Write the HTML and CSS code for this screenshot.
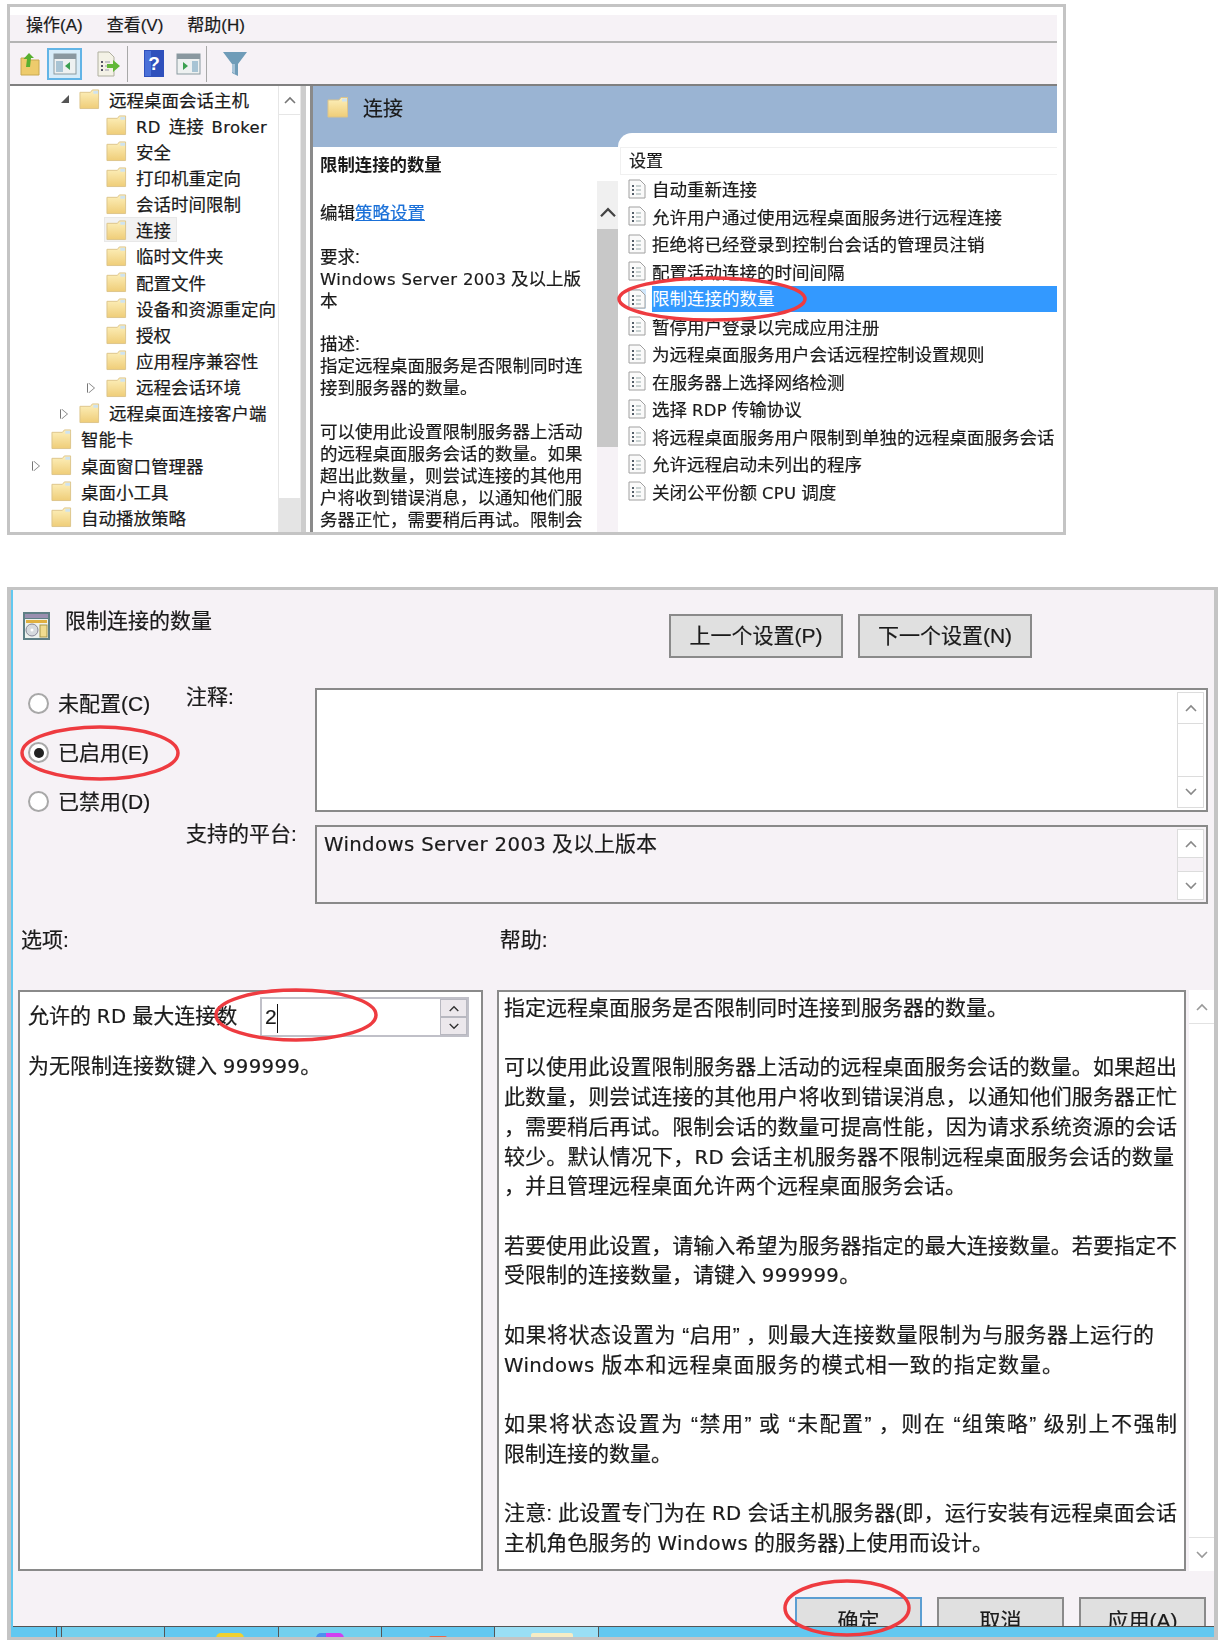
FILE: index.html
```html
<!DOCTYPE html>
<html lang="zh-CN">
<head>
<meta charset="utf-8">
<title>限制连接的数量</title>
<link rel="stylesheet" href="styles.css">
</head>
<body>
<svg class="defs" width="0" height="0" aria-hidden="true">
  <defs>
    <linearGradient id="fg" x1="0" y1="0" x2="0" y2="1"><stop offset="0" stop-color="#fdf0bc"/><stop offset="1" stop-color="#efcd78"/></linearGradient>
    <symbol id="folder" viewBox="0 0 22 22">
      <path d="M1 4h11l2-2.500h6.500V21H1z" fill="url(#fg)" stroke="#dcc48a" stroke-width="1"/>
      <path d="M15 2.500h5v3h-5z" fill="#cfe3ef"/>
    </symbol>
    <symbol id="doc" viewBox="0 0 18 20">
      <path d="M1 1h11l5 5v13H1z" fill="#fafafa" stroke="#a0a0a0"/>
      <path d="M4 6h2v2H4zM4 10h2v2H4zM4 14h2v2H4z" fill="#55606a"/>
      <path d="M8 7h5M8 11h5M8 15h5" stroke="#9aa" fill="none"/>
    </symbol>
    <symbol id="up" viewBox="0 0 14 10"><path d="M2 8l5-5 5 5" fill="none" stroke="currentColor" stroke-width="1.6"/></symbol>
    <symbol id="down" viewBox="0 0 14 10"><path d="M2 2l5 5 5-5" fill="none" stroke="currentColor" stroke-width="1.6"/></symbol>
  </defs>
</svg>

<section class="mmc">
  <div class="menubar"><span>操作(A)</span><span>查看(V)</span><span>帮助(H)</span></div>
  <div class="toolbar">
    <svg class="tb tb-up" width="20" height="24" viewBox="0 0 20 24"><path d="M1 6h6l2 2h10v15H1z" fill="#eecb6c" stroke="#c9a850"/><path d="M6 15l1-8H3.500L9 1l5 5h-3l-1 9z" fill="#58b030"/></svg>
    <span class="tb-active"><svg width="24" height="24" viewBox="0 0 24 24"><rect x="1" y="2" width="22" height="20" fill="#eef1f1" stroke="#8a9aa0"/><rect x="1" y="2" width="22" height="5" fill="#8a98a0"/><rect x="3" y="9" width="7" height="11" fill="#a8c4d4"/><path d="M17 10v8l-5-4z" fill="#3aa050"/></svg></span>
    <svg class="tb tb-ex" width="24" height="26" viewBox="0 0 24 26"><path d="M1 1h11l5 5v19H1z" fill="#f4f2e6" stroke="#b0b0a0"/><path d="M4 10h2v2H4zM4 14h2v2H4zM4 18h2v2H4z" fill="#556"/><path d="M8 11h5M8 15h4M8 19h4" stroke="#99a"/><path d="M10 13h6V9l7 6-7 6v-4h-6z" fill="#62b838"/></svg>
    <i class="tb-sep"></i>
    <svg class="tb tb-help" width="20" height="27" viewBox="0 0 20 27"><rect width="20" height="27" fill="#2f50bc"/><rect x="1" y="1" width="6" height="25" fill="#4a70d8"/><text x="10" y="20" class="tb-q">?</text></svg>
    <svg class="tb tb-pane" width="25" height="24" viewBox="0 0 25 24"><rect x="1" y="2" width="23" height="20" fill="#eef1f1" stroke="#8a9aa0"/><rect x="1" y="2" width="23" height="5" fill="#8a98a0"/><rect x="16" y="9" width="6" height="11" fill="#a8c4d4"/><path d="M7 10v8l5-4z" fill="#3aa050"/></svg>
    <i class="tb-sep tb-sep2"></i>
    <svg class="tb tb-filter" width="24" height="26" viewBox="0 0 24 26"><path d="M0 1h24l-9 12v12l-6-3v-9z" fill="#6f9cb8"/><path d="M9 13h3v10l-3-2z" fill="#a8c4d8"/></svg>
  </div>
  <div class="mmc-body">
    <div class="tree">
      <div class="tree-rows">
        <div class="row l1"><i class="tri open"></i><svg class="fld"><use href="#folder"/></svg><span>远程桌面会话主机</span></div>
        <div class="row l2"><svg class="fld"><use href="#folder"/></svg><span class="wide"><span class="la">RD</span> 连接 <span class="la">Broker</span></span></div>
        <div class="row l2"><svg class="fld"><use href="#folder"/></svg><span>安全</span></div>
        <div class="row l2"><svg class="fld"><use href="#folder"/></svg><span>打印机重定向</span></div>
        <div class="row l2"><svg class="fld"><use href="#folder"/></svg><span>会话时间限制</span></div>
        <div class="row l2 current"><div class="cur"><svg class="fld"><use href="#folder"/></svg><span>连接</span></div></div>
        <div class="row l2"><svg class="fld"><use href="#folder"/></svg><span>临时文件夹</span></div>
        <div class="row l2"><svg class="fld"><use href="#folder"/></svg><span>配置文件</span></div>
        <div class="row l2"><svg class="fld"><use href="#folder"/></svg><span>设备和资源重定向</span></div>
        <div class="row l2"><svg class="fld"><use href="#folder"/></svg><span>授权</span></div>
        <div class="row l2"><svg class="fld"><use href="#folder"/></svg><span>应用程序兼容性</span></div>
        <div class="row l2"><i class="tri"></i><svg class="fld"><use href="#folder"/></svg><span>远程会话环境</span></div>
        <div class="row l1"><i class="tri"></i><svg class="fld"><use href="#folder"/></svg><span>远程桌面连接客户端</span></div>
        <div class="row l0"><svg class="fld"><use href="#folder"/></svg><span>智能卡</span></div>
        <div class="row l0"><i class="tri"></i><svg class="fld"><use href="#folder"/></svg><span>桌面窗口管理器</span></div>
        <div class="row l0"><svg class="fld"><use href="#folder"/></svg><span>桌面小工具</span></div>
        <div class="row l0"><svg class="fld"><use href="#folder"/></svg><span>自动播放策略</span></div>
      </div>
      <div class="tree-scroll">
        <div class="ts-up"><svg width="14" height="10"><use href="#up"/></svg></div>
        <div class="ts-thumb"></div>
      </div>
    </div>
    <div class="pane">
      <div class="pane-head"><svg class="fld-h"><use href="#folder"/></svg><span>连接</span></div>
      <div class="pane-body">
        <div class="desc">
          <p class="desc-title">限制连接的数量</p>
          <p>编辑<a class="link">策略设置</a></p>
          <p>要求:<br><span class="la">Windows Server 2003</span> 及以上版<br>本</p>
          <p>描述:<br>指定远程桌面服务是否限制同时连<br>接到服务器的数量。</p>
          <p>可以使用此设置限制服务器上活动<br>的远程桌面服务会话的数量。如果<br>超出此数量，则尝试连接的其他用<br>户将收到错误消息，以通知他们服<br>务器正忙，需要稍后再试。限制会</p>
        </div>
        <div class="desc-scroll">
          <div class="ds-up"><svg width="20" height="14" viewBox="0 0 14 10"><use href="#up"/></svg></div>
          <div class="ds-thumb"></div>
        </div>
        <div class="list">
          <div class="list-head">设置</div>
          <div class="item"><svg class="dc"><use href="#doc"/></svg><span>自动重新连接</span></div>
          <div class="item"><svg class="dc"><use href="#doc"/></svg><span>允许用户通过使用远程桌面服务进行远程连接</span></div>
          <div class="item"><svg class="dc"><use href="#doc"/></svg><span>拒绝将已经登录到控制台会话的管理员注销</span></div>
          <div class="item"><svg class="dc"><use href="#doc"/></svg><span>配置活动连接的时间间隔</span></div>
          <div class="item selected"><svg class="dc"><use href="#doc"/></svg><span>限制连接的数量</span></div>
          <div class="item"><svg class="dc"><use href="#doc"/></svg><span>暂停用户登录以完成应用注册</span></div>
          <div class="item"><svg class="dc"><use href="#doc"/></svg><span>为远程桌面服务用户会话远程控制设置规则</span></div>
          <div class="item"><svg class="dc"><use href="#doc"/></svg><span>在服务器上选择网络检测</span></div>
          <div class="item"><svg class="dc"><use href="#doc"/></svg><span>选择 <span class="la">RDP</span> 传输协议</span></div>
          <div class="item"><svg class="dc"><use href="#doc"/></svg><span>将远程桌面服务用户限制到单独的远程桌面服务会话</span></div>
          <div class="item"><svg class="dc"><use href="#doc"/></svg><span>允许远程启动未列出的程序</span></div>
          <div class="item"><svg class="dc"><use href="#doc"/></svg><span>关闭公平份额 <span class="la">CPU</span> 调度</span></div>
        </div>
      </div>
    </div>
  </div>
</section>

<section class="dialog">
  <div class="dlg-inner">
    <header class="dlg-head">
      <svg class="dlg-icon" width="27" height="28" viewBox="0 0 27 28"><rect width="27" height="28" fill="#5f7f86"/><rect x="2" y="2" width="23" height="4" fill="#9a8fb0"/><rect x="2" y="7" width="23" height="19" fill="#eef2ee"/><rect x="3" y="8" width="21" height="3" fill="#e0b040"/><circle cx="9" cy="18" r="6" fill="#d6dade" stroke="#889"/><circle cx="9" cy="18" r="1.500" fill="#fff"/><rect x="17" y="13" width="7" height="12" fill="#f0dc90" stroke="#a89848"/></svg>
      <div class="dlg-title">限制连接的数量</div>
      <div class="nav-btns"><button class="btn nav">上一个设置(P)</button><button class="btn nav">下一个设置(N)</button></div>
    </header>
    <div class="config">
      <div class="radios">
        <label class="radio"><i class="dot"></i>未配置(C)</label>
        <label class="radio"><i class="dot on"></i>已启用(E)</label>
        <label class="radio"><i class="dot"></i>已禁用(D)</label>
      </div>
      <div class="lbl lbl-note">注释:</div>
      <div class="box box-note">
        <div class="sb">
          <div class="sb-btn"><svg width="14" height="10"><use href="#up"/></svg></div>
          <div class="sb-track"></div>
          <div class="sb-btn"><svg width="14" height="10"><use href="#down"/></svg></div>
        </div>
      </div>
      <div class="lbl lbl-plat">支持的平台:</div>
      <div class="box box-plat">
        <div class="plat-text"><span class="la">Windows Server 2003</span> 及以上版本</div>
        <div class="sb">
          <div class="sb-btn"><svg width="14" height="10"><use href="#up"/></svg></div>
          <div class="sb-track"></div>
          <div class="sb-btn"><svg width="14" height="10"><use href="#down"/></svg></div>
        </div>
      </div>
    </div>
    <div class="sect-labels"><span class="sl-opt">选项:</span><span class="sl-help">帮助:</span></div>
    <div class="panels">
      <div class="opts">
        <div class="opt-row"><span class="opt-label">允许的 <span class="la">RD</span> 最大连接数</span>
          <div class="spin"><div class="spin-val">2<i class="caret"></i></div><div class="spin-btns"><div class="spin-btn"><svg width="12" height="9" viewBox="0 0 14 10"><use href="#up"/></svg></div><div class="spin-btn"><svg width="12" height="9" viewBox="0 0 14 10"><use href="#down"/></svg></div></div></div>
        </div>
        <div class="opt-note">为无限制连接数键入 <span class="la">999999</span>。</div>
      </div>
      <div class="help">
        <div>指定远程桌面服务是否限制同时连接到服务器的数量。</div>
        <div class="gap"></div>
        <div class="j">可以使用此设置限制服务器上活动的远程桌面服务会话的数量。如果超出</div>
        <div class="j">此数量，则尝试连接的其他用户将收到错误消息，以通知他们服务器正忙</div>
        <div class="j">，需要稍后再试。限制会话的数量可提高性能，因为请求系统资源的会话</div>
        <div class="j jd">较少。默认情况下，<span class="la">RD</span> 会话主机服务器不限制远程桌面服务会话的数量</div>
        <div>，并且管理远程桌面允许两个远程桌面服务会话。</div>
        <div class="gap"></div>
        <div class="j">若要使用此设置，请输入希望为服务器指定的最大连接数量。若要指定不</div>
        <div>受限制的连接数量，请键入 <span class="la">999999</span>。</div>
        <div class="gap"></div>
        <div class="j ja">如果将状态设置为 “启用” ，则最大连接数量限制为与服务器上运行的</div>
        <div class="j jb"><span class="la">Windows</span> 版本和远程桌面服务的模式相一致的指定数量。</div>
        <div class="gap"></div>
        <div class="j">如果将状态设置为 “禁用” 或 “未配置” ，则在 “组策略” 级别上不强制</div>
        <div>限制连接的数量。</div>
        <div class="gap"></div>
        <div class="j">注意: 此设置专门为在 <span class="la">RD</span> 会话主机服务器(即，运行安装有远程桌面会话</div>
        <div class="j jc">主机角色服务的 <span class="la">Windows</span> 的服务器)上使用而设计。</div>
      </div>
      <div class="help-sb">
        <div class="hs-btn"><svg width="14" height="10"><use href="#up"/></svg></div>
        <div class="hs-track"></div>
        <div class="hs-btn"><svg width="14" height="10"><use href="#down"/></svg></div>
      </div>
    </div>
    <footer class="dlg-foot">
      <button class="btn act primary">确定</button>
      <button class="btn act">取消</button>
      <button class="btn act">应用(A)</button>
    </footer>
    <div class="taskbar">
      <div class="tk w46"></div>
      <div class="tk w5"></div>
      <div class="tk w103 lt"></div>
      <div class="tk w114"><i class="peek yellow"></i></div>
      <div class="tk w103 lt"><i class="peek purple"></i></div>
      <div class="tk w113"><i class="peek red"></i></div>
      <div class="tk w104 act-tk"><i class="peek cream"></i></div>
    </div>
  </div>
</section>

<svg class="marks" width="1228" height="1648" viewBox="0 0 1228 1648" aria-hidden="true">
  <ellipse cx="712" cy="299" rx="93" ry="21"/>
  <ellipse cx="100" cy="753" rx="78" ry="26"/>
  <ellipse cx="296" cy="1015" rx="80" ry="25"/>
  <ellipse cx="847" cy="1608" rx="62" ry="27"/>
</svg>
</body>
</html>
```
FILE: styles.css
```css
* { box-sizing: border-box; }
html, body { margin: 0; padding: 0; }
body {
  position: relative;
  width: 1228px;
  height: 1648px;
  overflow: hidden;
  background: #fff;
  color: #1a1a1a;
  font-family: "Liberation Sans", "Noto Sans CJK SC", sans-serif;
  -webkit-text-stroke: 0.2px currentColor;
}
.defs { position: absolute; }
.mmc, .dialog { filter: blur(0.45px); }
p { margin: 0; }
.la { font-family: "DejaVu Sans", sans-serif; font-size: 0.94em; letter-spacing: 0.35px; line-height: 1; }
.wide { word-spacing: 3px; }

/* top console window */
.mmc {
  margin: 4px 0 0 7px;
  width: 1059px;
  height: 531px;
  border: 3px solid #c4c4c4;
  padding: 8px 6px 0 0;
  overflow: hidden;
  display: flex;
  flex-direction: column;
  font-size: 17.5px;
}
.menubar {
  height: 28px;
  flex: none;
  background: #f6f2f6;
  border-bottom: 2px solid #b4b4b4;
  display: flex;
  gap: 24px;
  padding-left: 16px;
  font-size: 17px;
  line-height: 22px;
}
.toolbar {
  height: 43px;
  flex: none;
  background: #f6f2f6;
  border-bottom: 2px solid #808080;
  display: flex;
  align-items: center;
  padding-left: 10px;
}
.tb { flex: none; }
.tb-active {
  width: 35px;
  height: 32px;
  margin-left: 7px;
  border: 2px solid #62b4e6;
  background: #d8ecf8;
  display: flex;
  align-items: center;
  justify-content: center;
}
.tb-ex { margin-left: 15px; }
.tb-sep { width: 1px; height: 36px; background: #a8a8a8; margin-left: 6px; }
.tb-help { margin-left: 16px; }
.tb-pane { margin-left: 12px; }
.tb-sep2 { margin-left: 5px; }
.tb-filter { margin-left: 16px; }
.tb-q { fill: #fff; font-size: 19px; font-weight: 700; text-anchor: middle; font-family: "Liberation Sans", sans-serif; }
.mmc-body { flex: 1; display: flex; min-height: 0; }

/* tree */
.tree { width: 296px; margin-right: 4px; flex: none; display: flex; overflow: hidden; border-right: 5px solid #cdcdcd; }
.tree-rows { width: 268px; flex: none; background: #fff; }
.row { height: 26.15px; display: flex; align-items: center; white-space: nowrap; position: relative; }
.row.l0 { padding-left: 41px; }
.row.l1 { padding-left: 69px; }
.row.l2 { padding-left: 96px; }
.fld { width: 21px; height: 22px; flex: none; margin-right: 9px; }
.cur { display: flex; align-items: center; background: #f2f2f2; border: 1px solid #e8e8e8; margin-left: -2px; padding-left: 1px; padding-right: 5px; height: 25px; }
.tri {
  position: absolute;
  width: 0; height: 0;
  border-left: 6px solid #fff;
  border-top: 5px solid transparent;
  border-bottom: 5px solid transparent;
  filter: drop-shadow(1px 0 0 #777) drop-shadow(-1px 0 0 #777);
  top: 9px;
}
.tri.open {
  border: 0;
  border-right: 8px solid #555;
  border-top: 8px solid transparent;
  filter: none;
}
.row.l0 .tri { left: 23px; }
.row.l1 .tri { left: 51px; }
.row.l2 .tri { left: 78px; }
.tree-scroll { width: 23px; flex: none; display: flex; flex-direction: column; background: #fff; border-left: 1px solid #e6e6e6; border-right: 1px solid #e6e6e6; }
.ts-up { height: 29px; color: #777; display: flex; align-items: center; justify-content: center; border-bottom: 1px solid #e6e6e6; }
.ts-thumb { margin-top: auto; height: 34px; background: #e4e4e4; }

/* right pane */
.pane { flex: 1; min-width: 0; border-left: 3px solid #8a8a8a; display: flex; flex-direction: column; overflow: hidden; }
.pane-head {
  height: 61px;
  flex: none;
  background: #9ab4d3;
  display: flex;
  align-items: flex-start;
  padding: 10px 0 0 14px;
  font-size: 20px;
  line-height: 24px;
}
.fld-h { width: 22px; height: 22px; margin-right: 14px; }
.pane-head span { margin-top: 1px; }
.pane-body { flex: 1; display: flex; min-height: 0; background: #fff; }
.desc { width: 284px; flex: none; padding: 8px 0 0 7px; font-size: 17.5px; line-height: 21.9px; white-space: nowrap; overflow: hidden; }
.desc p { margin-bottom: 21.9px; }
.desc .desc-title { margin-bottom: 26px; font-weight: 700; -webkit-text-stroke: 0; font-size: 17.4px; }
.link { color: #1a70d8; text-decoration: underline; }
.desc-scroll { width: 21px; flex: none; margin-top: 34px; background: #f6f2f6; display: flex; flex-direction: column; }
.ds-up { height: 48px; background: #f0f0f0; color: #444; display: flex; align-items: flex-end; justify-content: center; padding-bottom: 10px; }
.ds-thumb { height: 218px; background: #c8c8c8; }
.list { flex: 1; min-width: 0; margin-top: -14px; background: #fff; border-top-left-radius: 14px; padding-top: 14px; position: relative; white-space: nowrap; overflow: hidden; }
.list-head { height: 28px; margin-left: 2px; padding-left: 8px; border: 1px solid #f0f0f0; border-right: 0; line-height: 28px; font-size: 17px; }
.item { height: 27.53px; display: flex; align-items: center; padding-left: 10px; font-size: 17.5px; }
.dc { width: 18px; height: 20px; flex: none; margin-right: 6px; }
.selected span { background: #3399ff; color: #fff; flex: 1; line-height: 26px; -webkit-text-stroke: 0; }
.selected .dc { background: #cfe6fb; }

/* dialog */
.dialog {
  margin: 52px 0 0 7px;
  width: 1211px;
  height: 1053px;
  border: solid #c4c4c4;
  border-width: 3px 4px 3px 4px;
}
.dlg-inner {
  height: 100%;
  background: #f6f2f6;
  border-left: 2px solid #62c8f0;
  display: flex;
  flex-direction: column;
  overflow: hidden;
  font-size: 21px;
}
.dlg-head { height: 98px; flex: none; display: flex; align-items: flex-start; padding-left: 10px; }
.dlg-icon { margin-top: 22px; flex: none; }
.dlg-title { margin: 16px 0 0 15px; line-height: 30px; }
.nav-btns { margin-left: auto; padding: 24px 182px 0 0; display: flex; gap: 15px; }
.btn {
  font: inherit;
  color: #1a1a1a;
  background: #e0e0e0;
  border: 2px solid #8a8a8a;
  padding: 0;
  -webkit-text-stroke: 0.2px currentColor;
}
.btn.nav { width: 174px; height: 44px; padding-bottom: 4px; }
.config {
  flex: none;
  display: grid;
  grid-template-columns: 173px 129px 893px;
  grid-template-rows: 124px 79px;
  row-gap: 13px;
}
.radios { grid-row: 1 / span 2; padding: 5px 0 0 15px; display: flex; flex-direction: column; gap: 28px; }
.radio { display: flex; align-items: center; height: 21px; line-height: 23px; white-space: nowrap; }
.dot { width: 21px; height: 21px; flex: none; border: 2px solid #a8a8a8; border-radius: 50%; background: #fff; margin-right: 9px; display: flex; align-items: center; justify-content: center; }
.dot.on::after { content: ""; width: 10px; height: 10px; border-radius: 50%; background: #222; }
.lbl { white-space: nowrap; line-height: 24px; }
.lbl-note { grid-column: 2; grid-row: 1; margin-top: -3px; }
.lbl-plat { grid-column: 2; grid-row: 2; margin-top: -3px; }
.box { border: 2px solid #8a8a8a; display: flex; justify-content: space-between; }
.box-note { grid-column: 3; grid-row: 1; background: #fff; }
.box-plat { grid-column: 3; grid-row: 2; }
.plat-text { padding: 4px 0 0 7px; line-height: 26px; white-space: nowrap; }
.sb { width: 27px; margin: 2px 2px 2px auto; flex: none; display: flex; flex-direction: column; background: #fff; border: 1px solid #dcdcdc; }
.box-plat .sb { background: #f6f2f6; }
.sb-btn { height: 31px; flex: none; color: #888; background: #fff; display: flex; align-items: center; justify-content: center; }
.sb-btn:first-child { border-bottom: 1px solid #dcdcdc; }
.sb-btn:last-child { border-top: 1px solid #dcdcdc; }
.box-plat .sb-btn { height: 28px; }
.sb-track { flex: 1; }
.sect-labels { flex: none; height: 86px; padding: 24px 0 0 8px; line-height: 24px; display: flex; }
.sl-help { margin-left: 431px; }
.panels { flex: none; height: 581px; display: flex; padding-left: 5px; }
.opts { width: 465px; flex: none; background: #fff; border: 2px solid #8a8a8a; padding: 5px 0 0 8px; white-space: nowrap; }
.opt-row { display: flex; align-items: center; height: 40px; }
.opt-label { width: 232px; flex: none; margin-top: -6px; }
.spin { width: 209px; height: 40px; flex: none; border: 2px solid #c0c0c8; display: flex; }
.spin-val { flex: 1; padding-left: 3px; line-height: 36px; position: relative; }
.caret { display: inline-block; width: 1.5px; height: 29px; background: #111; vertical-align: middle; margin-left: 0; }
.spin-btns { width: 27px; flex: none; display: flex; flex-direction: column; gap: 2px; background: #b8b8c0; padding: 1px; }
.spin-btn { flex: 1; background: #ece8ec; display: flex; align-items: center; justify-content: center; color: #333; }
.opt-note { margin-top: 14px; line-height: 30px; }
.help { width: 689px; flex: none; margin-left: 14px; background: #fff; border: 2px solid #8a8a8a; padding: 1px 7px 0 5px; line-height: 29.73px; white-space: nowrap; overflow: hidden; }
.help > div { height: 29.73px; }
.help .j { text-align: justify; text-align-last: justify; white-space: normal; }
.help .ja { width: 650px; }
.help .jb { width: 559px; }
.help .jc { width: 489px; }
.help .jd { width: 670px; }
.help-sb { width: 25px; flex: none; margin-left: 3px; background: #fff; display: flex; flex-direction: column; }
.hs-btn { height: 34px; flex: none; color: #999; display: flex; align-items: center; justify-content: center; }
.hs-btn:first-child { border-bottom: 1px solid #e2e2e2; }
.hs-btn:last-child { border-top: 1px solid #e2e2e2; }
.hs-track { flex: 1; }
.dlg-foot { flex: none; height: 55px; padding: 26px 8px 0 0; display: flex; justify-content: flex-end; gap: 15px; overflow: hidden; }
.btn.act { width: 127px; height: 44px; flex: none; }
.btn.primary { border-color: #5c9ed2; }
.taskbar { flex: 1; min-height: 0; background: #62c8f0; border-top: 1px solid #555; display: flex; overflow: hidden; }
.tk { flex: none; height: 100%; border-right: 1px solid #555; display: flex; justify-content: center; position: relative; }
.tk.lt { background: #74d0ee; }
.act-tk { background: #9adff5; }
.w46 { width: 44px; }
.w5 { width: 5px; }
.w103 { width: 103px; }
.w114 { width: 114px; }
.w113 { width: 113px; }
.w104 { width: 104px; }
.peek { display: block; height: 5px; margin-top: 6px; border-radius: 8px 8px 0 0; }
.yellow { width: 28px; margin-left: 16px; background: #f0d030; }
.purple { width: 28px; background: linear-gradient(90deg, #4a90f0 0 35%, #d040f0 35%); }
.red { width: 18px; height: 2px; margin-top: 9px; background: #e86848; border-radius: 2px 2px 0 0; }
.cream { width: 42px; margin-left: 10px; background: #f6ecc4; border-radius: 2px 2px 0 0; }

/* red hand-drawn marks over the screenshot */
.marks { position: absolute; left: 0; top: 0; pointer-events: none; filter: blur(0.5px); }
.marks ellipse { fill: none; stroke: #ee3b40; stroke-width: 3.5; }
```
